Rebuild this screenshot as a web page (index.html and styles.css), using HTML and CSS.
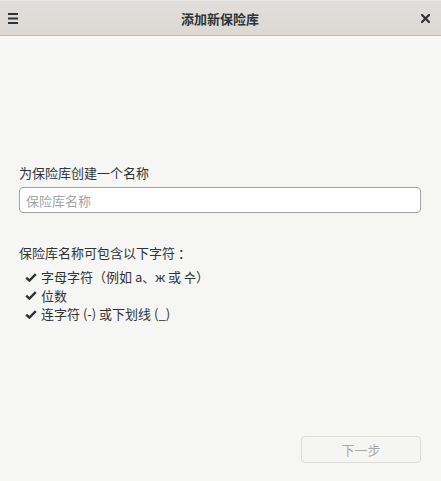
FILE: index.html
```html
<!DOCTYPE html>
<html lang="zh-CN">
<head>
<meta charset="utf-8">
<title>添加新保险库</title>
<link rel="stylesheet" href="styles.css">
</head>
<body>
<div class="window">
  <header class="titlebar">
    <button class="icon-btn menu" aria-label="菜单">
      <svg width="10" height="11" viewBox="0 0 10 11"><rect x="0" y="0" width="10" height="2" fill="#2e3436"/><rect x="0" y="4.5" width="10" height="2" fill="#2e3436"/><rect x="0" y="9" width="10" height="2" fill="#2e3436"/></svg>
    </button>
    <h1 class="title">添加新保险库</h1>
    <button class="icon-btn close" aria-label="关闭">
      <svg width="9" height="9" viewBox="0 0 9 9"><path d="M1 1 L8 8 M8 1 L1 8" stroke="#2e3436" stroke-width="2.2" stroke-linecap="square"/></svg>
    </button>
  </header>
  <main class="content">
    <label class="field-label" for="vault">为保险库创建一个名称</label>
    <input id="vault" class="text-input" type="text" placeholder="保险库名称">
    <p class="rules-title">保险库名称可包含以下字符<span class="punct">：</span></p>
    <ul class="rules">
      <li><span class="check"><svg width="12" height="9" viewBox="0 0 12 9"><path d="M1.2 4.6 L4.4 7.6 L10.8 1.2" fill="none" stroke="#2e3436" stroke-width="2.4"/></svg></span>字母字符（例如 a、ж 或 수）</li>
      <li><span class="check"><svg width="12" height="9" viewBox="0 0 12 9"><path d="M1.2 4.6 L4.4 7.6 L10.8 1.2" fill="none" stroke="#2e3436" stroke-width="2.4"/></svg></span>位数</li>
      <li><span class="check"><svg width="12" height="9" viewBox="0 0 12 9"><path d="M1.2 4.6 L4.4 7.6 L10.8 1.2" fill="none" stroke="#2e3436" stroke-width="2.4"/></svg></span>连字符 (-) 或下划线 (_)</li>
    </ul>
  </main>
  <footer class="actions">
    <button class="next" disabled>下一步</button>
  </footer>
</div>
</body>
</html>
```
FILE: styles.css
```css
* { box-sizing: border-box; }
html, body {
  margin: 0;
  padding: 0;
  height: 100%;
}
body {
  font-family: "Noto Sans", "Noto Sans CJK SC", sans-serif;
  font-size: 13px;
  color: #2e3436;
  background: #f6f6f5;
}
.window {
  display: flex;
  flex-direction: column;
  height: 100%;
}
.titlebar {
  height: 36px;
  flex: none;
  display: flex;
  align-items: center;
  justify-content: space-between;
  background: linear-gradient(#e1dedb, #dcd8d4);
  border-top: 1px solid #eae8e6;
  border-bottom: 1px solid #bfb8b1;
  padding: 0 8px;
}
.icon-btn {
  border: 0;
  background: none;
  padding: 0;
  width: 12px;
  height: 12px;
  display: flex;
  align-items: center;
  justify-content: flex-start;
}
.close {
  justify-content: center;
  margin-right: 1px;
}
.title {
  margin: 0;
  font-size: 13px;
  font-weight: bold;
  color: #2e3436;
  font-family: "Noto Sans CJK SC", sans-serif;
}
.content {
  flex: 1;
  padding: 128px 20px 0 19px;
  display: flex;
  flex-direction: column;
}
.field-label {
  font-family: "Noto Sans CJK SC", sans-serif;
  line-height: 18px;
  margin-bottom: 5px;
}
.text-input {
  width: 100%;
  height: 26px;
  border: 1px solid #a3a6a6;
  border-radius: 4px;
  background: #ffffff;
  padding: 0 6px;
  font-family: "Noto Sans CJK SC", sans-serif;
  font-size: 13px;
  color: #2e3436;
  outline: none;
}
.text-input::placeholder { color: #a2a5a5; }
.rules-title {
  margin: 31px 0 0 0;
  line-height: 18px;
  font-family: "Noto Sans CJK SC", sans-serif;
}
.punct {
  padding-left: 3px;
}
.rules {
  list-style: none;
  margin: 6px 0 0 0;
  padding: 0 0 0 6px;
  font-family: "Noto Sans CJK SC", sans-serif;
}
.rules li {
  display: flex;
  align-items: center;
  line-height: 18.5px;
  gap: 4px;
}
.check {
  display: flex;
  width: 12px;
  justify-content: center;
}
.actions {
  flex: none;
  display: flex;
  justify-content: flex-end;
  padding: 0 20px 18px 0;
}
.next {
  width: 120px;
  height: 27px;
  border: 1px solid #dcdcdb;
  border-radius: 4px;
  background: #f5f5f4;
  color: #a7aaaa;
  font-family: "Noto Sans CJK SC", sans-serif;
  font-size: 13px;
  padding: 0;
}
```
